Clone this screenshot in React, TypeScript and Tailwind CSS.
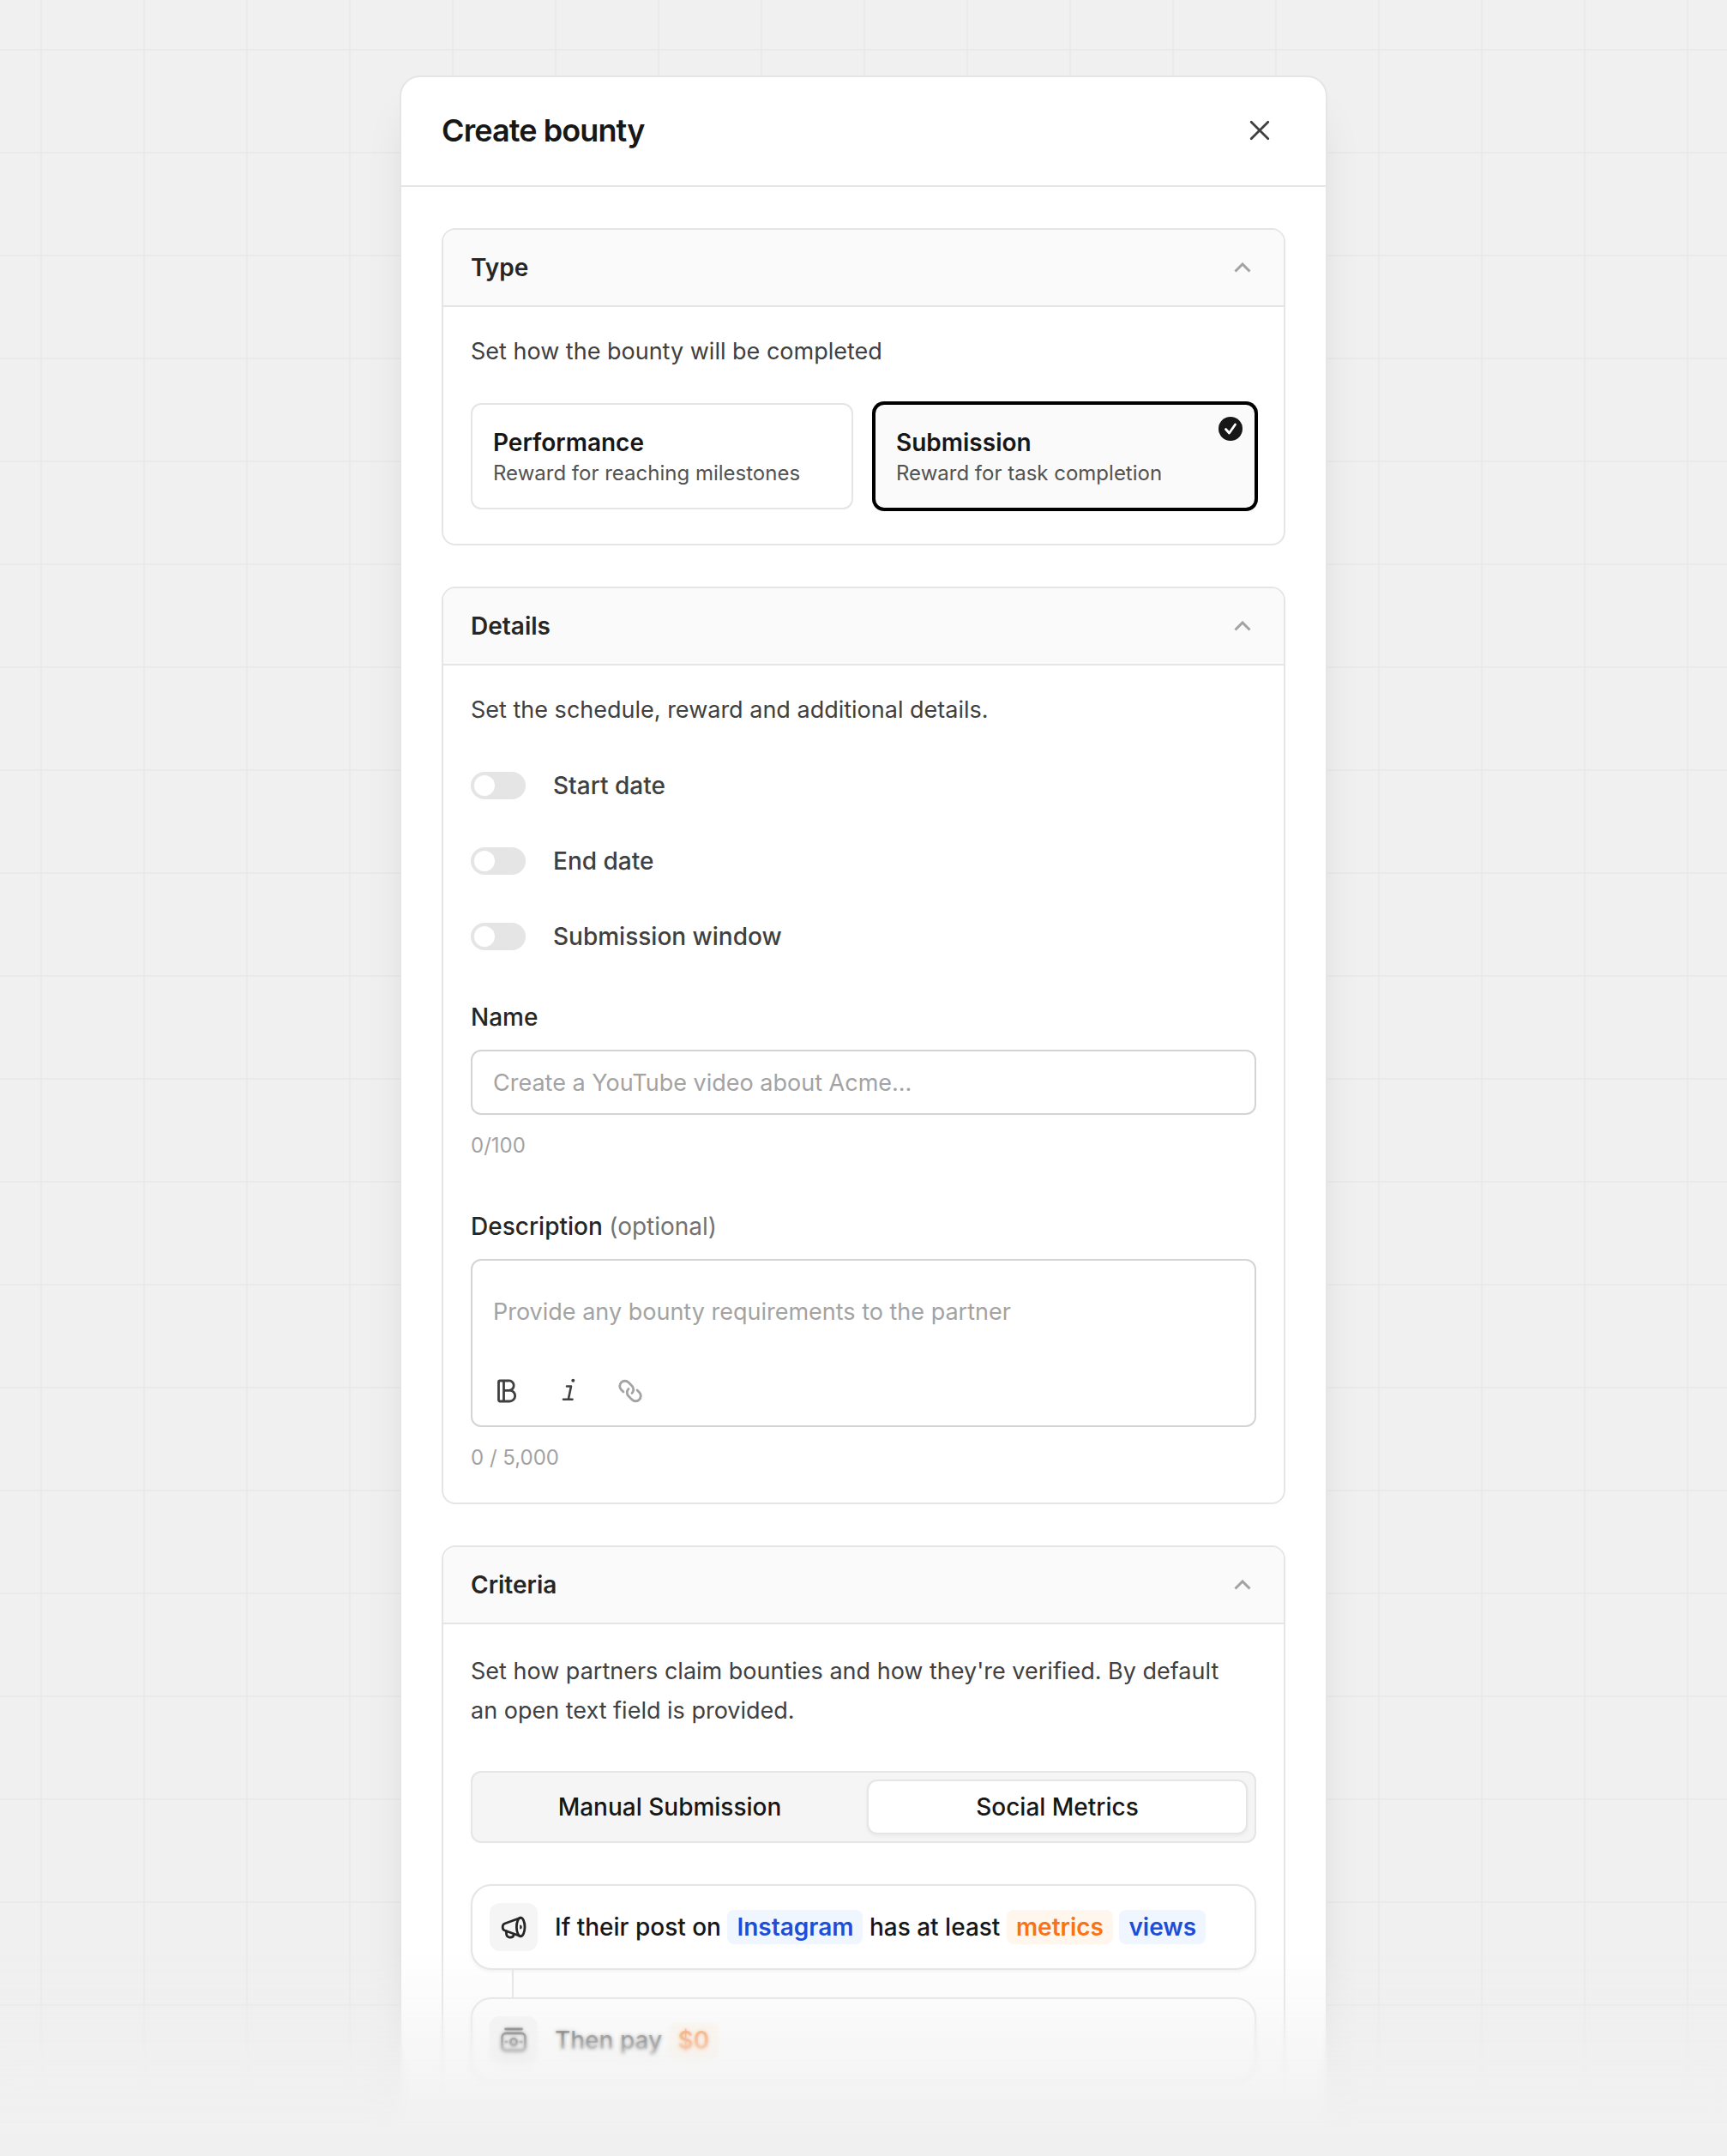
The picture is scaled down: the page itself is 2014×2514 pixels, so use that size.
import { useState } from 'react';
import type { ReactNode } from 'react';

const BOUNTY_TYPES = [
  { id: 'performance', label: 'Performance', hint: 'Reward for reaching milestones' },
  { id: 'submission', label: 'Submission', hint: 'Reward for task completion' },
];

const CRITERIA_TABS = ['Manual Submission', 'Social Metrics'];

function CloseIcon() {
  return (
    <svg viewBox="0 0 24 24" className="size-6" fill="none" stroke="currentColor" strokeWidth="2.8" strokeLinecap="round" aria-hidden="true">
      <path d="M2.2 2.2 21.800 21.800M21.800 2.200 2.200 21.800" />
    </svg>
  );
}

function ChevronUpIcon() {
  return (
    <svg viewBox="0 0 20 12" className="h-3 w-5 text-[#a3a3a3]" fill="none" stroke="currentColor" strokeWidth="3" aria-hidden="true">
      <path d="m1.500 10.500 8.500-8.500 8.500 8.500" />
    </svg>
  );
}

function CheckBadge() {
  return (
    <svg viewBox="0 0 28 28" className="absolute top-3.5 right-3.5 size-7" aria-hidden="true">
      <circle cx="14" cy="14" r="14" fill="#171717" />
      <path d="m8.500 14.500 4 4.500 7-10" fill="none" stroke="#fff" strokeWidth="2.8" strokeLinecap="round" strokeLinejoin="round" />
    </svg>
  );
}

function BoldIcon() {
  return (
    <svg viewBox="0 0 32 32" className="size-8" fill="none" stroke="currentColor" strokeWidth="2.8" strokeLinejoin="round" strokeLinecap="round" aria-hidden="true">
      <path d="M8 4h9.500a5.600 5.600 0 0 1 2 11.200A6.400 6.400 0 0 1 19 28H8a1.500 1.500 0 0 1-1.500-1.500v-21A1.500 1.500 0 0 1 8 4ZM12.500 4v24M12.500 15.300h7" />
    </svg>
  );
}

function ItalicIcon() {
  return (
    <svg viewBox="0 0 32 32" className="size-8" fill="none" stroke="currentColor" strokeWidth="2.6" strokeLinejoin="round" strokeLinecap="round" aria-hidden="true">
      <path d="M14 10.500h5l-3.200 15.300M10 25.800h10.500" />
      <circle cx="21.300" cy="3.800" r="2" fill="currentColor" stroke="none" />
    </svg>
  );
}

function LinkIcon() {
  return (
    <svg viewBox="0 0 32 32" className="size-8" fill="none" stroke="currentColor" strokeWidth="2.8" strokeLinecap="round" aria-hidden="true">
      <path d="M8 17 5.500 14.500a6 6 0 0 1 0-8.500a6 6 0 0 1 8.500 0l4 4a6 6 0 0 1 0 8.500" />
      <path d="M24 15l2.500 2.500a6 6 0 0 1 0 8.500a6 6 0 0 1-8.500 0l-4-4a6 6 0 0 1 0-8.500" />
    </svg>
  );
}

function MegaphoneIcon() {
  return (
    <svg viewBox="0 0 32 32" className="size-8" fill="none" stroke="currentColor" strokeWidth="2.8" strokeLinecap="round" strokeLinejoin="round" aria-hidden="true">
      <ellipse cx="24.200" cy="16" rx="4.800" ry="10.800" />
      <path d="M24 5.200 5.500 12C4 12.500 3.200 14 3.200 16s.8 3.500 2.300 4L24 26.800" />
      <path d="M7.500 21v3a4.500 4.500 0 0 0 8.700 1.200" />
      <path d="M23.200 13.500a2.500 2.500 0 0 1 0 5Z" fill="currentColor" stroke="none" />
    </svg>
  );
}

function MoneyIcon() {
  return (
    <svg viewBox="0 0 32 32" className="size-8" fill="none" stroke="currentColor" strokeWidth="2.8" strokeLinecap="round" strokeLinejoin="round" aria-hidden="true">
      <path d="M6.500 3h19" />
      <rect x="2.500" y="8" width="27" height="20" rx="4.500" />
      <circle cx="16" cy="18" r="3.800" />
      <path d="M7 18h1M24 18h1" />
    </svg>
  );
}

function Section({ title, children }: { title: string; children: ReactNode }) {
  return (
    <section className="overflow-hidden rounded-2xl border-2 border-[#e5e5e5] bg-white">
      <h2 className="border-b-2 border-[#e5e5e5] bg-[#fafafa]">
        <button type="button" aria-expanded="true" className="flex h-[88px] w-full items-center justify-between pr-[38px] pl-8 text-[28px] font-semibold text-[#262626]">
          {title}
          <ChevronUpIcon />
        </button>
      </h2>
      <div className="px-8 pt-8">{children}</div>
    </section>
  );
}

function Toggle({ id, label }: { id: string; label: string }) {
  return (
    <div className="flex h-10 items-center gap-8">
      <input
        id={id}
        type="checkbox"
        role="switch"
        className="h-8 w-16 shrink-0 appearance-none rounded-full bg-[#e5e5e5] p-1 before:block before:size-6 before:rounded-full before:bg-white checked:bg-[#171717] checked:before:ml-8"
      />
      <label htmlFor={id} className="text-[28px] leading-10 font-medium text-[#404040]">{label}</label>
    </div>
  );
}

function Pill({ tone, children }: { tone: 'blue' | 'orange'; children: ReactNode }) {
  const colors = tone === 'blue' ? 'bg-[#eff6ff] text-[#1d4ed8]' : 'bg-[#fff7ed] text-[#f97316]';
  return (
    <button type="button" className={`h-10 rounded-lg px-[11px] leading-10 font-semibold ${colors}`}>
      {children}
    </button>
  );
}

function RuleCard({ icon, children }: { icon: ReactNode; children: ReactNode }) {
  return (
    <div className="flex h-[100px] items-center gap-5 rounded-3xl border-2 border-[#e5e5e5] bg-white px-5 shadow-[0_2px_4px_rgba(0,0,0,0.05)]">
      <div className="flex size-14 shrink-0 items-center justify-center rounded-xl bg-[#f5f5f5] text-[#262626]">{icon}</div>
      <p className="text-[28px] leading-10 font-medium text-[#171717]">{children}</p>
    </div>
  );
}

export default function App() {
  const [type, setType] = useState('submission');
  const [tab, setTab] = useState('Social Metrics');
  const [name, setName] = useState('');
  const [description, setDescription] = useState('');

  return (
    <div className="relative h-screen overflow-hidden bg-[#f0f0f0] bg-[linear-gradient(to_right,#eaeaea_2px,transparent_2px),linear-gradient(to_bottom,#eaeaea_2px,transparent_2px)] bg-[length:120px_120px] bg-[position:47px_57px] font-['Inter',sans-serif]">
      <main className="mx-auto mt-[88px] max-w-[1082px] rounded-3xl border-2 border-[#e5e5e5] bg-white shadow-[0_40px_50px_-10px_rgba(0,0,0,0.1)]">
        <header className="flex h-32 items-center justify-between border-b-2 border-[#e5e5e5] pr-[65px] pb-0.5 pl-[47px]">
          <h1 className="text-4xl font-semibold tracking-tight text-[#171717]">Create bounty</h1>
          <button type="button" aria-label="Close" className="text-[#404040]">
            <CloseIcon />
          </button>
        </header>

        <div className="flex flex-col gap-12 px-[47px] pt-12 pb-12">
          <Section title="Type">
            <p className="text-[27px] leading-10 text-[#404040]">Set how the bounty will be completed</p>
            <div className="grid grid-cols-2 gap-6 py-10">
              {BOUNTY_TYPES.map(t => (
                <button
                  key={t.id}
                  type="button"
                  aria-pressed={type === t.id}
                  onClick={() => setType(t.id)}
                  className={`relative rounded-xl border-2 p-6 text-left ${type === t.id ? 'border-black bg-[#fafafa] ring-2 ring-black' : 'border-[#e5e5e5] bg-white'}`}
                >
                  <span className="block text-[28px] leading-10 font-semibold text-[#171717]">{t.label}</span>
                  <span className="block text-2xl leading-8 text-[#525252]">{t.hint}</span>
                  {type === t.id && <CheckBadge />}
                </button>
              ))}
            </div>
          </Section>

          <Section title="Details">
            <p className="text-[27px] leading-10 text-[#404040]">Set the schedule, reward and additional details.</p>
            <div className="mt-12 flex flex-col gap-12">
              <Toggle id="start-date" label="Start date" />
              <Toggle id="end-date" label="End date" />
              <Toggle id="submission-window" label="Submission window" />
            </div>

            <div className="mt-14">
              <label htmlFor="name" className="block text-[28px] leading-9 font-medium text-[#262626]">Name</label>
              <input
                id="name"
                type="text"
                maxLength={100}
                value={name}
                onChange={e => setName(e.target.value)}
                placeholder="Create a YouTube video about Acme..."
                className="mt-5 block h-[76px] w-full rounded-xl border-2 border-[#d4d4d4] bg-white px-6 text-[27px] text-[#171717] placeholder:text-[#a3a3a3]"
              />
              <p className="mt-5 text-2xl leading-8 text-[#a3a3a3]">{name.length}/100</p>
            </div>

            <div className="mt-[60px] pb-9">
              <label htmlFor="description" className="block text-[28px] leading-9 font-medium text-[#262626]">
                Description <span className="font-normal text-[#737373]">(optional)</span>
              </label>
              <div className="mt-5 rounded-xl border-2 border-[#d4d4d4] bg-white px-6 pt-10 pb-6">
                <textarea
                  id="description"
                  rows={1}
                  maxLength={5000}
                  value={description}
                  onChange={e => setDescription(e.target.value)}
                  placeholder="Provide any bounty requirements to the partner"
                  className="block h-10 w-full resize-none text-[27px] leading-10 text-[#171717] placeholder:text-[#a3a3a3]"
                />
                <div className="mt-14 flex h-8 items-center gap-10 text-[#404040]">
                  <button type="button" aria-label="Bold"><BoldIcon /></button>
                  <button type="button" aria-label="Italic"><ItalicIcon /></button>
                  <button type="button" aria-label="Link" className="text-[#a3a3a3]"><LinkIcon /></button>
                </div>
              </div>
              <p className="mt-5 text-2xl leading-8 text-[#a3a3a3]">{description.length} / 5,000</p>
            </div>
          </Section>

          <Section title="Criteria">
            <p className="pr-6 text-[27px] leading-[46px] text-[#404040]">
              Set how partners claim bounties and how they're verified. By default an open text field is provided.
            </p>
            <div role="tablist" className="mt-[47px] grid grid-cols-2 gap-2 rounded-xl border-2 border-[#e5e5e5] bg-[#f5f5f5] p-2">
              {CRITERIA_TABS.map(t => (
                <button
                  key={t}
                  type="button"
                  role="tab"
                  aria-selected={tab === t}
                  onClick={() => setTab(t)}
                  className={`h-16 rounded-xl border-2 text-[28px] font-medium text-[#171717] ${tab === t ? 'border-[#e5e5e5] bg-white shadow-[0_2px_4px_rgba(0,0,0,0.05)]' : 'border-transparent'}`}
                >
                  {t}
                </button>
              ))}
            </div>

            <div className="mt-12 pb-10">
              <RuleCard icon={<MegaphoneIcon />}>
                If their post on <Pill tone="blue">Instagram</Pill> has at least <Pill tone="orange">metrics</Pill> <Pill tone="blue">views</Pill>
              </RuleCard>
              <div className="ml-12 h-8 w-0.5 bg-[#e5e5e5]" />
              <RuleCard icon={<MoneyIcon />}>
                Then pay <Pill tone="orange">$0</Pill>
              </RuleCard>
            </div>
          </Section>
        </div>
      </main>

      {/* Bottom fade: the blur grows towards the lower edge */}
      <div className="pointer-events-none absolute inset-x-0 bottom-0 h-60">
        <div className="absolute inset-0 mask-[linear-gradient(to_bottom,transparent_28%,black_50%)] backdrop-blur-[2px]" />
        <div className="absolute inset-0 mask-[linear-gradient(to_bottom,transparent_45%,black_75%)] backdrop-blur-[10px]" />
        <div className="absolute inset-0 bg-[linear-gradient(to_bottom,rgba(240,240,240,0),#f0f0f0_90%)]" />
      </div>
    </div>
  );
}
